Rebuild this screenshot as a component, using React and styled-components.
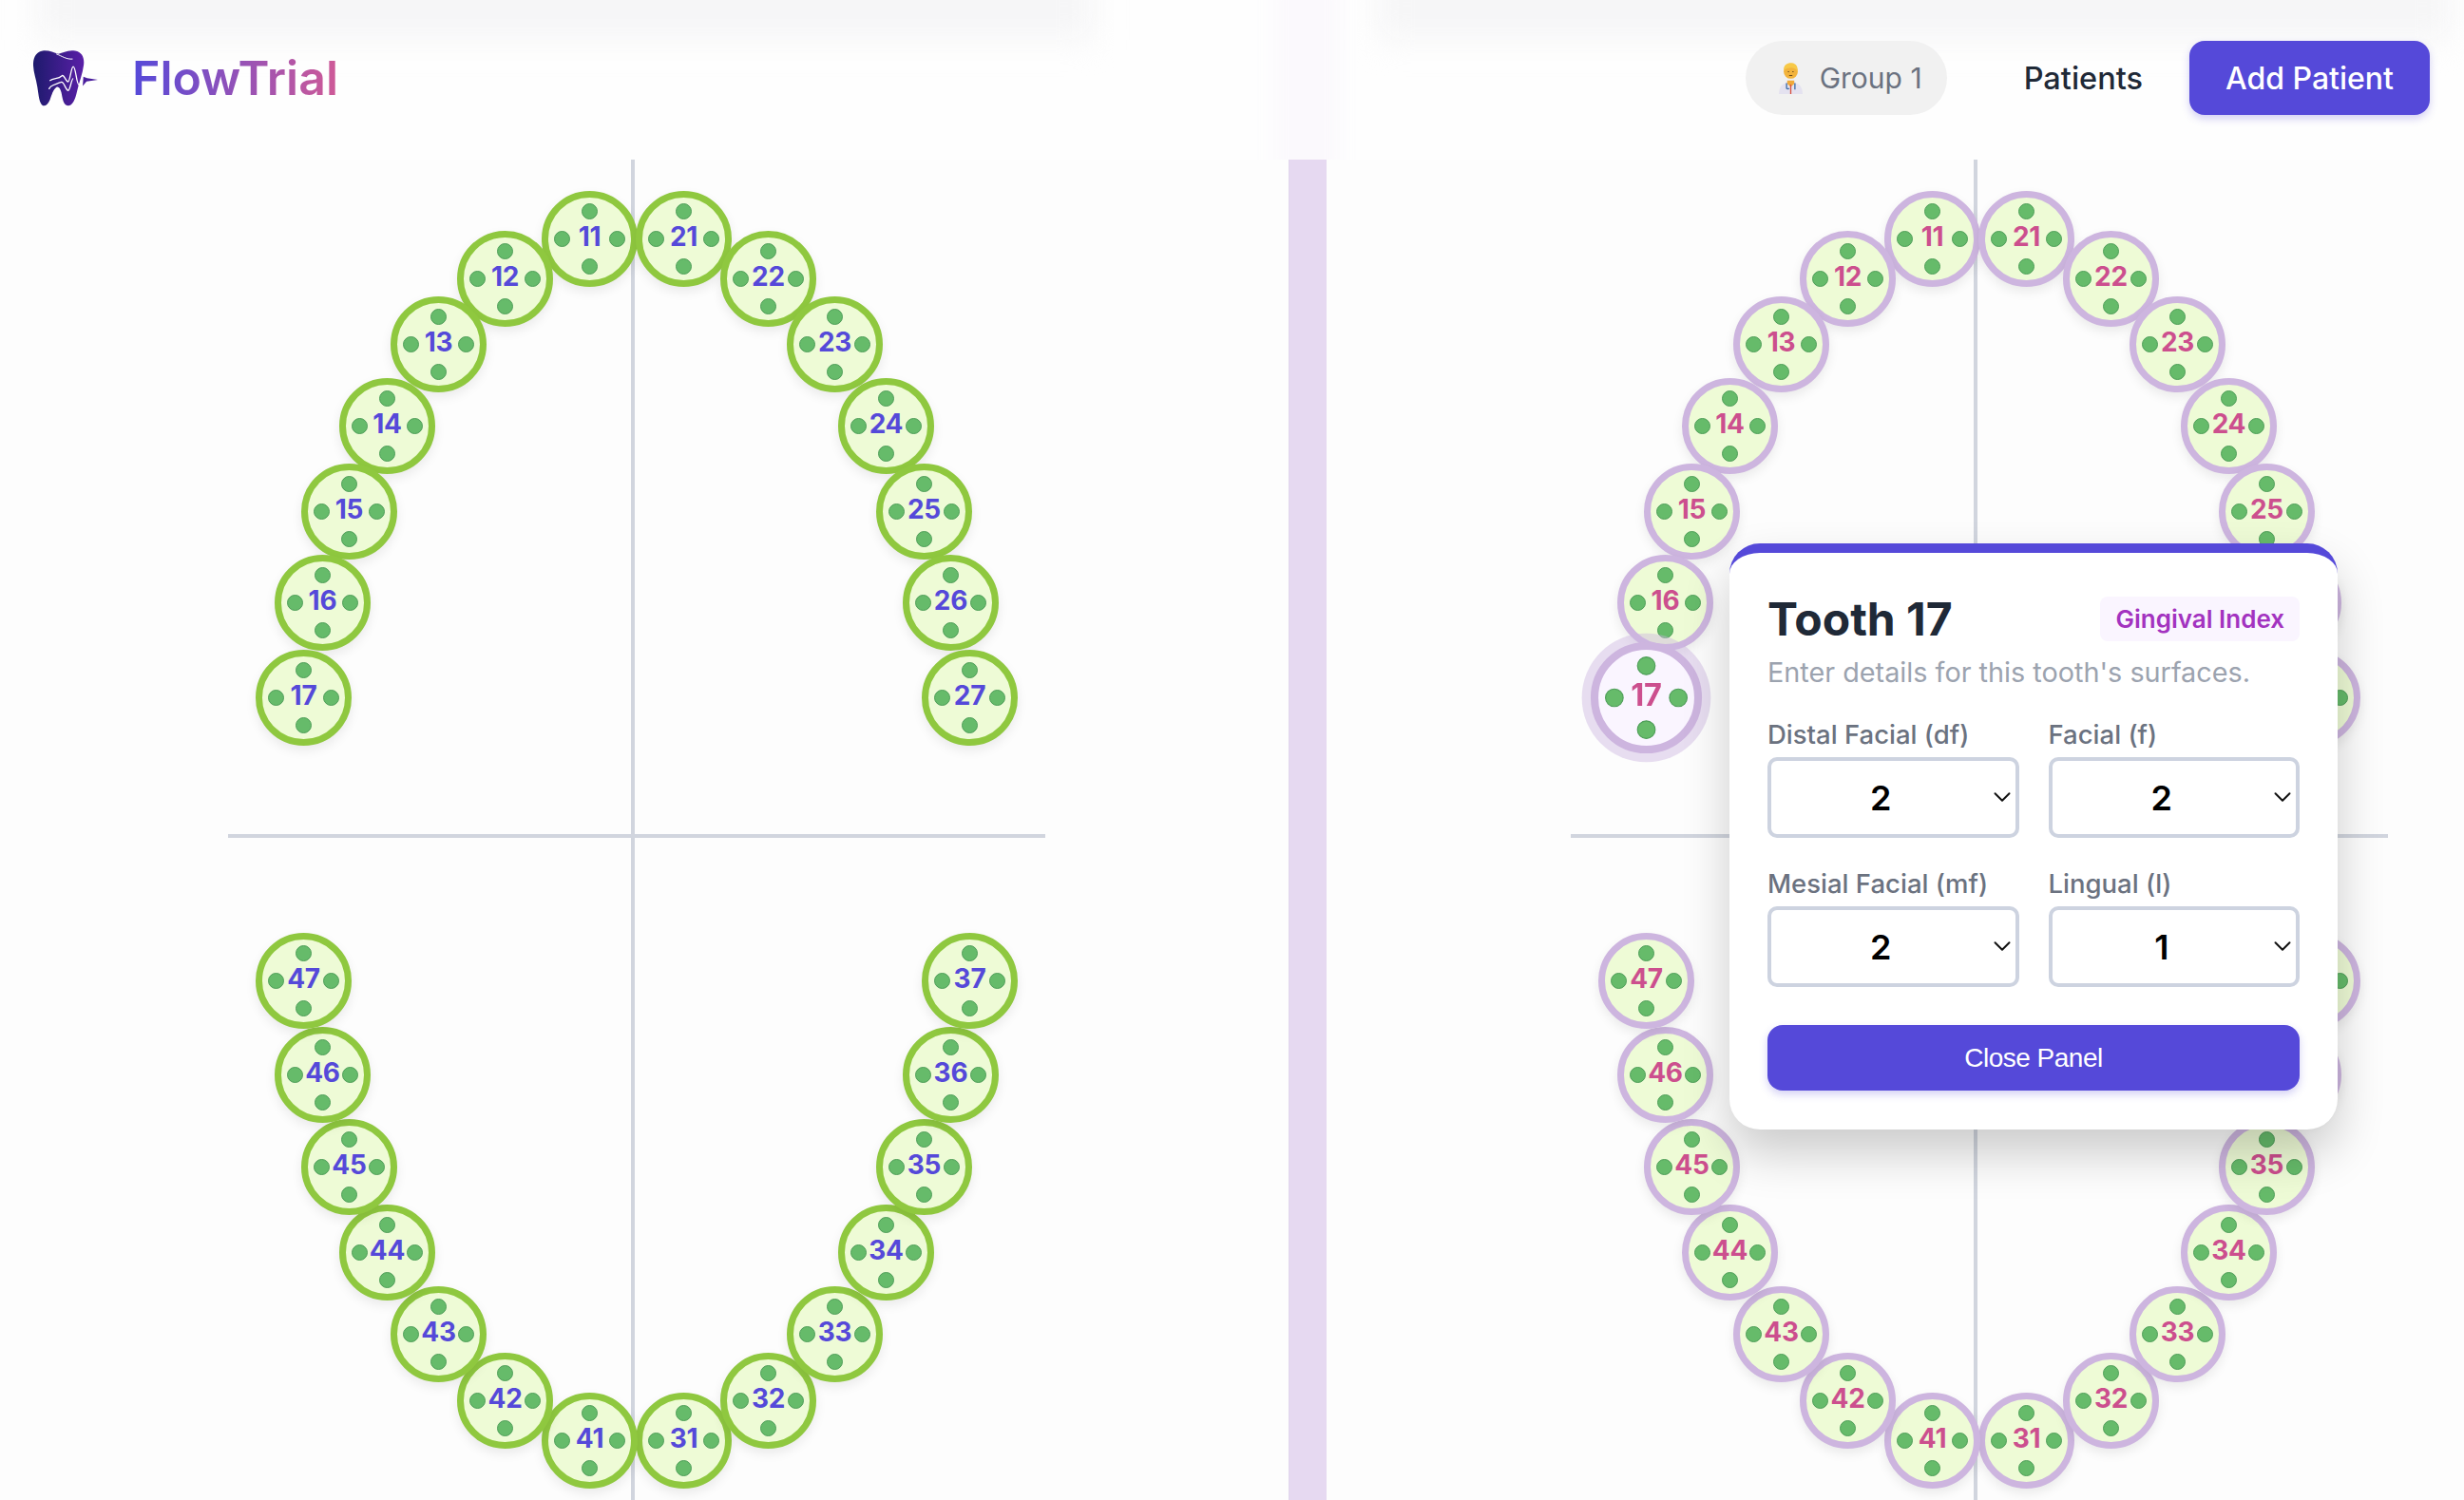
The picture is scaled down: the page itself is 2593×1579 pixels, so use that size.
import React from 'react';
import styled, { createGlobalStyle } from 'styled-components';
import { ChevronDown } from 'lucide-react';

const GlobalStyle = createGlobalStyle`
  html, body {
    margin: 0;
    padding: 0;
    background: #fdfdfd;
    font-family: Inter, "Liberation Sans", sans-serif;
    overflow: hidden;
  }
  * {
    box-sizing: border-box;
  }
`;

const INDIGO = '#5549d9';

// tooth centres measured on the left quadrants, y from the top of the chart
const UPPER = [
  { n: 1, x: 621, y: 84 },
  { n: 2, x: 532, y: 125.5 },
  { n: 3, x: 462, y: 195 },
  { n: 4, x: 408, y: 281 },
  { n: 5, x: 368, y: 371 },
  { n: 6, x: 340, y: 467 },
  { n: 7, x: 320, y: 567 },
];

const LOWER = [
  { n: 1, x: 621, y: 1349 },
  { n: 2, x: 532, y: 1307 },
  { n: 3, x: 462, y: 1237 },
  { n: 4, x: 408, y: 1151 },
  { n: 5, x: 368, y: 1061 },
  { n: 6, x: 340, y: 964 },
  { n: 7, x: 320, y: 865 },
];

const MID = 670.5;

const TEETH = [
  ...UPPER.map((t) => ({ id: 10 + t.n, x: t.x, y: t.y })),
  ...UPPER.map((t) => ({ id: 20 + t.n, x: MID * 2 - t.x, y: t.y })),
  ...LOWER.map((t) => ({ id: 30 + t.n, x: MID * 2 - t.x, y: t.y })),
  ...LOWER.map((t) => ({ id: 40 + t.n, x: t.x, y: t.y })),
];

const Page = styled.div`
  width: 2593px;
  height: 1579px;
  display: flex;
  flex-direction: column;
  overflow: hidden;
`;

const Header = styled.header`
  position: relative;
  height: 168px;
  flex: none;
  display: flex;
  align-items: center;
  justify-content: space-between;
  padding: 0 36px 4px 35px;
  background: #fefefe;
  overflow: hidden;
`;

const Haze = styled.div`
  position: absolute;
  top: -30px;
  left: ${(p) => p.$left}px;
  width: ${(p) => p.$width}px;
  height: 72px;
  background: #f6f6f7;
  filter: blur(16px);
`;

const SplitGlow = styled.div`
  position: absolute;
  top: -20px;
  bottom: -20px;
  left: 1340px;
  width: 70px;
  background: #fbf9fd;
  filter: blur(10px);
`;

const Brand = styled.div`
  position: relative;
  display: flex;
  align-items: center;
  gap: 36px;
`;

const Logo = styled.svg`
  width: 68px;
  height: 60px;
  flex: none;
`;

const BrandName = styled.div`
  font-size: 50px;
  font-weight: 600;
  line-height: 60px;
  background: linear-gradient(90deg, #5549d9, #cf5a97);
  -webkit-background-clip: text;
  background-clip: text;
  color: transparent;
`;

const Nav = styled.nav`
  position: relative;
  display: flex;
  align-items: center;
`;

const GroupPill = styled.div`
  width: 212px;
  height: 78px;
  padding-left: 9px;
  border-radius: 39px;
  background: #f1f1f1;
  display: flex;
  align-items: center;
  justify-content: center;
  gap: 18px;
  font-size: 30px;
  color: #6b7280;
`;

const Doctor = styled.svg`
  width: 25px;
  height: 33px;
  flex: none;
`;

const NavLink = styled.a`
  margin: 0 49px 0 81px;
  font-size: 32.5px;
  font-weight: 500;
  color: #1f2937;
`;

const AddButton = styled.button`
  width: 253px;
  height: 78px;
  border: 0;
  border-radius: 16px;
  background: ${INDIGO};
  color: #fff;
  font: 500 32px Inter, sans-serif;
  box-shadow: 0 4px 8px rgba(85, 73, 217, 0.25);
`;

const Main = styled.main`
  position: relative;
  flex: 1;
  display: flex;
  min-height: 0;
`;

const ChartPanel = styled.section`
  flex: ${(p) => (p.$grow ? '1' : 'none')};
  width: ${(p) => (p.$grow ? 'auto' : '1356px')};
  padding-left: ${(p) => p.$inset}px;
`;

const Splitter = styled.div`
  width: 40px;
  flex: none;
  background: #e6d9f1;
  border-left: 1px solid #e0d5ec;
`;

const Chart = styled.div`
  position: relative;
  height: 1411px;
`;

const AxisV = styled.div`
  position: absolute;
  left: 664px;
  top: 0;
  bottom: 0;
  width: 4px;
  background: #d1d5de;
`;

const AxisH = styled.div`
  position: absolute;
  left: 240px;
  top: 710px;
  width: 860px;
  height: 4px;
  background: #d1d5de;
`;

const ToothNode = styled.div`
  position: absolute;
  width: 101px;
  height: 101px;
  margin: -51px 0 0 -51px;
  border-radius: 50%;
  border: 7px solid ${(p) => (p.$pink ? '#cdb5df' : '#8fc83f')};
  background: ${(p) => (p.$active ? '#faf5ff' : '#eefbd6')};
  transform: ${(p) => (p.$active ? 'scale(1.16)' : 'none')};
  box-shadow: ${(p) => (p.$active ? '0 0 0 8px rgba(205, 181, 223, 0.45)' : '0 5px 12px rgba(0, 0, 0, 0.08)')};
  z-index: ${(p) => (p.$active ? 2 : 1)};
`;

const ToothNumber = styled.span`
  position: absolute;
  left: 0;
  right: 0;
  top: 19px;
  text-align: center;
  font-size: 28px;
  font-weight: 700;
  letter-spacing: -0.25px;
  line-height: 44px;
  color: ${(p) => (p.$pink ? '#cc4f8e' : INDIGO)};
`;

const DOT_PLACES = {
  top: 'left: 35px; top: 6px;',
  bottom: 'left: 35px; top: 64px;',
  left: 'left: 6px; top: 35px;',
  right: 'left: 64px; top: 35px;',
};

const Dot = styled.i`
  position: absolute;
  width: 17px;
  height: 17px;
  border-radius: 50%;
  background: #66bb6a;
  border: 1px solid #4f9e59;
  ${(p) => DOT_PLACES[p.$at]}
`;

const DetailPanel = styled.aside`
  position: absolute;
  left: 1820px;
  top: 404px;
  width: 640px;
  height: 617px;
  z-index: 5;
  padding: 38px 40px 40px 40px;
  background: #fff;
  border-top: 10px solid ${INDIGO};
  border-radius: 32px;
  box-shadow: 0 25px 50px rgba(0, 0, 0, 0.2);
`;

const PanelHead = styled.div`
  display: flex;
  align-items: center;
  justify-content: space-between;
  height: 50px;
  margin-top: 6px;
`;

const Title = styled.h2`
  margin: 0;
  font-size: 48px;
  font-weight: 700;
  color: #1f2937;
`;

const Badge = styled.span`
  height: 47px;
  padding: 0 16px;
  display: flex;
  align-items: center;
  border-radius: 8px;
  background: #faf5ff;
  color: #a333c0;
  font-size: 26px;
  font-weight: 600;
`;

const Hint = styled.p`
  margin: 12px 0 0;
  font-size: 28.8px;
  line-height: 40px;
  color: #9ca3af;
`;

const FieldGrid = styled.div`
  display: grid;
  grid-template-columns: 1fr 1fr;
  column-gap: 31px;
  row-gap: 30px;
  margin-top: 27px;
`;

const Field = styled.label`
  display: block;
  font-size: 27.5px;
  font-weight: 500;
  line-height: 36px;
  color: #6b7280;
`;

const SelectBox = styled.div`
  position: relative;
  margin-top: 6px;
  height: 85px;
`;

const Select = styled.select`
  appearance: none;
  width: 100%;
  height: 100%;
  padding: 0 26px 0 0;
  border: 4px solid #cdd3e0;
  border-radius: 10px;
  background: #fff;
  color: #000;
  font: 600 36px Inter, sans-serif;
  text-align: center;
`;

const Chevron = styled(ChevronDown)`
  position: absolute;
  right: 3px;
  top: 27px;
  color: #111;
  pointer-events: none;
`;

const CloseButton = styled.button`
  display: block;
  width: 100%;
  height: 69px;
  margin-top: 40px;
  border: 0;
  border-radius: 16px;
  background: ${INDIGO};
  color: #fff;
  font: 400 28px "Liberation Sans", sans-serif;
  letter-spacing: -0.5px;
  box-shadow: 0 4px 8px rgba(85, 73, 217, 0.25);
`;

const Tooth = ({ id, x, y, pink, active }) => (
  <ToothNode $pink={pink} $active={active} style={{ left: x, top: y }}>
    <Dot $at="top" />
    <Dot $at="left" />
    <ToothNumber $pink={pink}>{id}</ToothNumber>
    <Dot $at="right" />
    <Dot $at="bottom" />
  </ToothNode>
);

const ToothChart = ({ pink }) => (
  <Chart>
    <AxisV />
    <AxisH />
    {TEETH.map((t) => (
      <Tooth key={t.id} id={t.id} x={t.x} y={t.y} pink={pink} active={pink && t.id === 17} />
    ))}
  </Chart>
);

const FlowLogo = () => (
  <Logo viewBox="45 36 205 180">
    <defs>
      <linearGradient id="toothFill" x1="0" x2="1" y1="0" y2="0">
        <stop offset="0" stopColor="#1d1a6c" />
        <stop offset="1" stopColor="#5a1fa8" />
      </linearGradient>
    </defs>
    <path
      fill="url(#toothFill)"
      d="M75 40C95 38 110 46 125 50C140 46 155 36 178 40C200 44 208 62 205 85C202 112 190 140 184 168C178 195 170 214 155 214C140 214 138 190 134 172C131 160 125 152 118 156C108 162 104 180 98 195C92 210 84 216 76 214C64 210 62 180 58 155C54 128 44 105 45 80C46 56 58 42 75 40Z"
    />
    <path fill="none" stroke="#fff" strokeWidth="3" d="M118 50C135 56 150 68 170 66" />
    <path
      fill="none"
      stroke="#fff"
      strokeWidth="4"
      strokeLinejoin="round"
      d="M97 135C110 126 125 130 135 120C142 112 148 138 155 138C162 138 165 90 172 90C180 90 182 148 190 148C196 148 202 128 208 125"
    />
    <path
      fill="none"
      stroke="#fff"
      strokeWidth="4"
      strokeLinejoin="round"
      d="M95 162C96 148 118 146 132 140C142 134 148 166 156 166C162 166 166 128 172 128"
    />
    <path fill="#4a1e9c" d="M204 122L216 127L250 132L214 137L202 152Z" />
  </Logo>
);

const DoctorIcon = () => (
  <Doctor viewBox="38 28 74 98">
    <path fill="#e4e2f0" d="M38 126C38 100 52 90 75 88C98 90 112 100 112 126Z" />
    <path fill="#f0a93a" d="M64 84H86V94L75 104L64 94Z" />
    <path fill="#d9503f" d="M73 96H77V126H73Z" />
    <path fill="none" stroke="#3f6ea8" strokeWidth="4" d="M62 92V108A6 6 0 0 0 70 108M88 92V112" />
    <circle cx="75" cy="56" r="22" fill="#f2b33c" />
    <path fill="#f7c948" d="M53 52C52 34 66 28 78 29C92 30 98 42 96 54C90 46 82 42 72 44C64 45 58 46 53 52Z" />
    <path stroke="#6b4a1c" strokeWidth="3" d="M66 56H70M80 56H84M70 68H80" />
  </Doctor>
);

const SURFACES = [
  { label: 'Distal Facial (df)', value: '2' },
  { label: 'Facial (f)', value: '2' },
  { label: 'Mesial Facial (mf)', value: '2' },
  { label: 'Lingual (l)', value: '1' },
];

const App = () => (
  <Page>
    <GlobalStyle />
    <Header>
      <Haze $left={40} $width={1110} />
      <Haze $left={1450} $width={1130} />
      <SplitGlow />
      <Brand>
        <FlowLogo />
        <BrandName>FlowTrial</BrandName>
      </Brand>
      <Nav>
        <GroupPill>
          <DoctorIcon />
          Group 1
        </GroupPill>
        <NavLink>Patients</NavLink>
        <AddButton>Add Patient</AddButton>
      </Nav>
    </Header>
    <Main>
      <ChartPanel $inset={0}>
        <ToothChart />
      </ChartPanel>
      <Splitter />
      <ChartPanel $grow $inset={17}>
        <ToothChart pink />
      </ChartPanel>
      <DetailPanel>
        <PanelHead>
          <Title>Tooth 17</Title>
          <Badge>Gingival Index</Badge>
        </PanelHead>
        <Hint>Enter details for this tooth's surfaces.</Hint>
        <FieldGrid>
          {SURFACES.map((s) => (
            <Field key={s.label}>
              {s.label}
              <SelectBox>
                <Select defaultValue={s.value}>
                  {['0', '1', '2', '3'].map((v) => (
                    <option key={v} value={v}>{v}</option>
                  ))}
                </Select>
                <Chevron size={30} strokeWidth={1.6} />
              </SelectBox>
            </Field>
          ))}
        </FieldGrid>
        <CloseButton>Close Panel</CloseButton>
      </DetailPanel>
    </Main>
  </Page>
);

export default App;
